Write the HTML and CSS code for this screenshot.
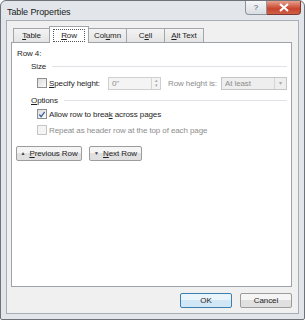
FILE: index.html
```html
<!DOCTYPE html>
<html lang="en">
<head>
    <meta charset="UTF-8">
    <title>Table Properties</title>
    <link rel="stylesheet" href="styles.css">
</head>
<body>
<div class="window">
    <div class="titlebar">
        <span class="title">Table Properties</span>
        <div class="caption-btns">
            <div class="help-btn">?</div>
            <div class="close-btn">
                <svg width="12" height="9" viewBox="0 0 12 9"><path d="M2 1 L10 8 M10 1 L2 8" stroke="#fff" stroke-width="2.2" fill="none"/></svg>
            </div>
        </div>
    </div>
    <div class="client">
        <div class="tabs">
            <div class="tab t-table"><u>T</u>able</div>
            <div class="tab active t-row"><span class="focus"><u>R</u>ow</span></div>
            <div class="tab t-column">Col<u>u</u>mn</div>
            <div class="tab t-cell">C<u>e</u>ll</div>
            <div class="tab t-alt"><u>A</u>lt Text</div>
        </div>
        <div class="panel">
            <div class="row-label">Row 4:</div>
            <div class="group">
                <div class="group-title">Size</div>
                <div class="group-line"></div>
            </div>
            <div class="size-row">
                <span class="check"></span>
                <span class="label spec"><u>S</u>pecify height:</span>
                <div class="spin">
                    <span class="spin-value">0"</span>
                    <div class="spin-arrows">
                        <span>&#9652;</span>
                        <span>&#9662;</span>
                    </div>
                </div>
                <span class="label gray">Row height is:</span>
                <div class="select">
                    <span>At least</span>
                    <span class="select-arrow">&#9662;</span>
                </div>
            </div>
            <div class="group">
                <div class="group-title"><u>O</u>ptions</div>
                <div class="group-line"></div>
            </div>
            <div class="option">
                <span class="check checked">
                    <svg width="9" height="9" viewBox="0 0 9 9"><path d="M1.5 4.5 L3.5 7 L7.5 1.5" stroke="#3b5f9e" stroke-width="1.4" fill="none"/></svg>
                </span>
                <span class="label">Allow row to brea<u>k</u> across pages</span>
            </div>
            <div class="option">
                <span class="check disabled"></span>
                <span class="label gray">Repeat as header row at the top of each page</span>
            </div>
            <div class="nav-btns">
                <div class="btn nav prev"><span class="tri">&#9650;</span> <u>P</u>revious Row</div>
                <div class="btn nav next"><span class="tri">&#9660;</span> <u>N</u>ext Row</div>
            </div>
        </div>
        <div class="footer">
            <div class="btn dlg default">OK</div>
            <div class="btn dlg">Cancel</div>
        </div>
    </div>
</div>
</body>
</html>
```

FILE: styles.css
```css
* {
margin: 0;
padding: 0;
box-sizing: border-box;
}

body {
background-color: #ffffff;
font-family: "Liberation Sans", Arial, sans-serif;
font-size: 8px;
letter-spacing: -0.1px;
color: #1e1e1e;
}

.window {
width: 305px;
height: 320px;
background-color: #e2e6eb;
border: 1px solid #6e7379;
border-radius: 6px 6px 2px 2px;
padding: 0 5px 5px 5px;
display: flex;
flex-direction: column;
}

.titlebar {
height: 19px;
display: flex;
justify-content: space-between;
align-items: flex-start;
}

.title {
margin-top: 6px;
margin-left: 1px;
font-size: 9px;
color: #1a1a1a;
}

.caption-btns {
display: flex;
margin-right: -2px;
}

.help-btn {
width: 22px;
height: 14px;
border: 1px solid #8d949c;
border-top: none;
border-radius: 0 0 0 4px;
background: linear-gradient(#f4f6f8, #d9dee4);
color: #555;
font-size: 8px;
text-align: center;
line-height: 13px;
}

.close-btn {
width: 34px;
height: 14px;
border: 1px solid #7e3a30;
border-top: none;
border-left: none;
border-radius: 0 0 4px 0;
background: linear-gradient(#e8a18f, #c8442b 60%, #d0614a);
display: flex;
justify-content: center;
align-items: center;
}

.client {
flex: 1;
background-color: #f0f0f0;
border: 1px solid #a8aeb5;
padding: 6px 6px 0 4px;
display: flex;
flex-direction: column;
}

.tabs {
display: flex;
height: 15px;
padding-left: 2px;
}

.tab {
height: 15px;
margin-top: 1px;
border: 1px solid #a2a6ab;
border-bottom: none;
border-right: none;
background: linear-gradient(#f3f3f3, #e3e3e3);
line-height: 13px;
text-align: center;
}

.t-table { width: 36px; }
.t-row { width: 40px; }
.t-column { width: 37px; }
.t-cell { width: 38px; }
.t-alt { width: 40px; }

.tab:last-child {
border-right: 1px solid #a2a6ab;
}

.tab.active {
height: 17px;
margin-top: -1px;
margin-bottom: -1px;
background: #ffffff;
border-right: 1px solid #a2a6ab;
padding: 2px 3px 0 3px;
position: relative;
z-index: 1;
}

.tab.active + .tab {
border-left: none;
}

.focus {
display: block;
border: 1px dotted #555;
line-height: 11px;
}

.panel {
height: 245px;
background-color: #ffffff;
border: 1px solid #9ea3a8;
padding: 5px 4px 0 5px;
}

.row-label {
line-height: 12px;
}

.group {
display: flex;
align-items: center;
margin-left: 14px;
height: 12px;
}

.group-title {
color: #1e1e1e;
margin-right: 6px;
}

.group-line {
flex: 1;
height: 1px;
background-color: #dfe3e8;
}

.size-row {
display: flex;
align-items: center;
margin-left: 20px;
height: 22px;
}

.check {
width: 10px;
height: 10px;
border: 1px solid #8e8f8f;
background: linear-gradient(135deg, #dcdcdc, #fbfbfb);
display: inline-flex;
justify-content: center;
align-items: center;
margin-right: 2px;
flex: none;
}

.check.disabled {
border-color: #c5c5c5;
background: #f4f4f4;
}

.label {
white-space: nowrap;
}

.label.spec {
width: 59px;
}

.label.gray {
color: #8d8d8d;
}

.spin {
display: flex;
margin-right: 7px;
width: 53px;
height: 13px;
border: 1px solid #cfcfcf;
background-color: #f4f4f4;
}

.spin-value {
flex: 1;
color: #8d8d8d;
padding-left: 3px;
line-height: 11px;
}

.spin-arrows {
width: 9px;
display: flex;
flex-direction: column;
border-left: 1px solid #d5d5d5;
font-size: 5px;
color: #aaa;
line-height: 5px;
text-align: center;
}

.select {
display: flex;
justify-content: space-between;
margin-left: auto;
width: 66px;
height: 13px;
border: 1px solid #c5c5c5;
background-color: #eeeeee;
color: #8d8d8d;
line-height: 11px;
padding-left: 3px;
}

.select-arrow {
width: 12px;
border-left: 1px solid #d5d5d5;
font-size: 6px;
text-align: center;
color: #aaa;
}

.option {
display: flex;
align-items: center;
margin-left: 20px;
height: 16px;
}

.nav-btns {
display: flex;
gap: 7px;
margin-top: 8px;
margin-left: -1px;
}

.btn {
height: 15px;
border: 1px solid #9c9c9c;
border-radius: 2px;
background: linear-gradient(#f5f5f5 50%, #e0e0e0 50%);
line-height: 13px;
text-align: center;
white-space: nowrap;
}

.btn.prev { width: 66px; }
.btn.next { width: 53px; }

.tri {
font-size: 5px;
color: #444;
vertical-align: 1px;
margin-right: 2px;
}

.footer {
display: flex;
justify-content: flex-end;
gap: 8px;
padding: 6px 0 0 0;
}

.btn.dlg {
width: 52px;
}

.btn.dlg.default {
border-color: #3c7fb1;
background: linear-gradient(#eaf4fb 50%, #d2e7f6 50%);
}
```
